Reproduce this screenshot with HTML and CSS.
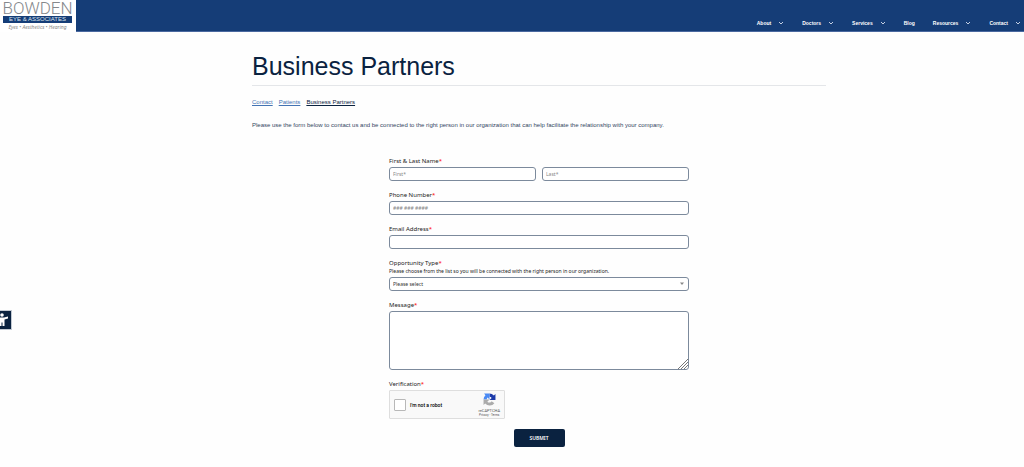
FILE: index.html
```html
<!DOCTYPE html>
<html lang="en">
<head>
  <meta charset="UTF-8">
  <meta name="viewport" content="width=device-width, initial-scale=1">
  <title>Business Partners</title>
  <link rel="stylesheet" href="styles.css">
</head>
<body>
  <!-- Header -->
  <header class="site-header">
    <a class="logo" href="#">
      <span class="logo-name">BOWDEN</span>
      <span class="logo-band">EYE &amp; ASSOCIATES</span>
      <span class="logo-tagline">Eyes • Aesthetics • Hearing</span>
    </a>
    <nav class="main-nav">
      <ul>
        <li><a href="#">About</a><svg class="chevron" viewBox="0 0 6 4"><path d="M1 1l2 2 2-2"/></svg></li>
        <li><a href="#">Doctors</a><svg class="chevron" viewBox="0 0 6 4"><path d="M1 1l2 2 2-2"/></svg></li>
        <li><a href="#">Services</a><svg class="chevron" viewBox="0 0 6 4"><path d="M1 1l2 2 2-2"/></svg></li>
        <li><a href="#">Blog</a></li>
        <li><a href="#">Resources</a><svg class="chevron" viewBox="0 0 6 4"><path d="M1 1l2 2 2-2"/></svg></li>
        <li><a href="#">Contact</a><svg class="chevron" viewBox="0 0 6 4"><path d="M1 1l2 2 2-2"/></svg></li>
      </ul>
    </nav>
  </header>

  <!-- Accessibility button -->
  <button class="access-btn" type="button" aria-label="Accessibility">
    <svg viewBox="0 0 14 14">
      <circle cx="7" cy="2" r="1.800"/>
      <path d="M1 3.500l4 1h4l4-1v2l-3.500 1V13h-2V9.500h-1V13h-2V6.500L1 5.500z"/>
    </svg>
  </button>

  <main class="content">
    <h1>Business Partners</h1>

    <nav class="breadcrumbs">
      <a href="#">Contact</a>
      <a href="#">Patients</a>
      <a href="#" class="current">Business Partners</a>
    </nav>

    <p class="intro">Please use the form below to contact us and be connected to the right person in our organization that can help facilitate the relationship with your company.</p>

    <form class="partner-form">
      <div class="field">
        <label for="first">First &amp; Last Name<span class="required">*</span></label>
        <div class="name-row">
          <input type="text" id="first" placeholder="First*">
          <input type="text" id="last" placeholder="Last*" aria-label="Last Name">
        </div>
      </div>

      <div class="field">
        <label for="phone">Phone Number<span class="required">*</span></label>
        <input type="tel" id="phone" placeholder="### ### ####">
      </div>

      <div class="field">
        <label for="email">Email Address<span class="required">*</span></label>
        <input type="email" id="email">
      </div>

      <div class="field">
        <label for="type">Opportunity Type<span class="required">*</span></label>
        <p class="hint">Please choose from the list so you will be connected with the right person in our organization.</p>
        <div class="select-wrap">
          <select id="type">
            <option>Please select</option>
          </select>
          <svg class="select-arrow" viewBox="0 0 6 4"><path d="M1 0.500h4L3 3z"/></svg>
        </div>
      </div>

      <div class="field">
        <label for="message">Message<span class="required">*</span></label>
        <div class="message-wrap">
          <textarea id="message"></textarea>
          <svg class="grip" viewBox="0 0 10 10"><path d="M0 10L10 0M3 10l7-7M6 10l4-4"/></svg>
        </div>
      </div>

      <div class="field">
        <label for="robot">Verification<span class="required">*</span></label>
        <div class="captcha">
          <input type="checkbox" id="robot">
          <label for="robot">I'm not a robot</label>
          <div class="captcha-brand">
            <svg viewBox="0 0 24 24">
              <path fill="#1c3aa9" d="M12 1a11 11 0 0 1 8 3.500L23 2v11H12l4-4A5 5 0 0 0 12 7z"/>
              <path fill="#4a8af4" d="M12 1v11L8.500 8.500A5 5 0 0 0 7 12H1A11 11 0 0 1 4.500 4L2 1z"/>
              <path fill="#ababab" d="M1 12h11l-4 4A5 5 0 0 0 16 15l5 4A11 11 0 0 1 4 19.500L1 22z"/>
            </svg>
            <span class="captcha-name">reCAPTCHA</span>
            <span class="captcha-links"><a href="#">Privacy</a> - <a href="#">Terms</a></span>
          </div>
        </div>
      </div>

      <button class="submit-btn" type="submit">SUBMIT</button>
    </form>
  </main>
</body>
</html>
```

FILE: styles.css
```css
* {
  margin: 0;
  padding: 0;
  box-sizing: border-box;
}
body {
  font-family: "Liberation Sans", Arial, sans-serif;
  background: #fefefe;
  color: #0a2240;
  font-size: 6px;
  line-height: 8px;
}
ul {
  list-style: none;
}

/* Header */
.site-header {
  display: flex;
  justify-content: space-between;
  align-items: stretch;
  height: 32px;
  background: #153d77;
  border-bottom: 1px solid #4a69a0;
}
.logo {
  display: flex;
  flex-direction: column;
  align-items: center;
  width: 76px;
  height: 32px;
  padding: 1px 4px 0 3px;
  background: #fff;
  text-decoration: none;
  white-space: nowrap;
}
.logo-name {
  font-family: Roboto, sans-serif;
  font-weight: 300;
  font-size: 17px;
  line-height: 15px;
  color: #85888c;
}
.logo-band {
  width: 100%;
  background: #153d77;
  color: #dfe6f0;
  font-size: 6px;
  line-height: 7px;
  text-align: center;
}
.logo-tagline {
  color: #888;
  font-family: "Noto Sans", sans-serif;
  font-size: 5px;
  font-style: italic;
  line-height: 8px;
}

/* Navigation */
.main-nav {
  display: flex;
  align-items: flex-end;
  padding: 0 3px 4px 0;
}
.main-nav ul {
  display: flex;
  gap: 18px;
}
.main-nav li {
  display: flex;
  align-items: center;
  gap: 7px;
}
.main-nav a {
  color: #fff;
  font-size: 5px;
  font-weight: 700;
  text-decoration: none;
}
.chevron {
  width: 6px;
  height: 4px;
  fill: none;
  stroke: #c5d0e2;
}

/* Accessibility button */
.access-btn {
  position: fixed;
  left: 0;
  top: 310px;
  width: 12px;
  height: 20px;
  background: #0a2240;
  border: 1px solid #c3cad3;
  border-left: none;
  overflow: hidden;
}
.access-btn svg {
  display: block;
  width: 14px;
  height: 14px;
  margin-left: -5px;
  fill: #fff;
}

/* Page content */
.content {
  width: 574px;
  max-width: 90%;
  margin: 0 auto;
  position: relative;
  left: 27px;
}
h1 {
  padding: 18px 0 3px;
  border-bottom: 1px solid #e4e6e9;
  font-size: 25px;
  font-weight: 400;
  line-height: 32px;
}
.breadcrumbs {
  display: flex;
  gap: 6px;
  margin-top: 12px;
}
.breadcrumbs a {
  color: #4373b3;
}
.breadcrumbs .current {
  color: #0a2240;
}
.intro {
  margin-top: 15px;
  color: #33455e;
}

/* Form */
.partner-form {
  display: flex;
  flex-direction: column;
  gap: 10px;
  max-width: 300px;
  margin: 28px auto 20px;
  font-family: "Noto Sans", sans-serif;
  color: #222;
}
.field > label {
  display: block;
  margin-bottom: 2px;
}
.required {
  color: #f00;
}
.hint {
  margin-top: -2px;
  margin-bottom: 2px;
  font-size: 5px;
  line-height: 8px;
}
.name-row {
  display: flex;
  gap: 6px;
}
input,
select,
textarea {
  display: block;
  width: 100%;
  height: 14px;
  padding: 0 3px;
  background: #fff;
  border: 1px solid #7c8a9c;
  border-radius: 3px;
  font: inherit;
  font-size: 5px;
  color: #333;
}
input::placeholder {
  color: #888;
}
.select-wrap,
.message-wrap {
  position: relative;
}
select {
  appearance: none;
}
.select-arrow {
  position: absolute;
  right: 4px;
  top: 5px;
  width: 6px;
  height: 4px;
  fill: #888;
}
textarea {
  height: 59px;
  resize: none;
}
.grip {
  position: absolute;
  right: 1px;
  bottom: 1px;
  width: 10px;
  height: 10px;
  stroke: #777;
}

/* Captcha */
.captcha {
  display: flex;
  align-items: center;
  width: 116px;
  height: 29px;
  padding: 0 4px;
  background: #f9f9f9;
  border: 1px solid #dedede;
  border-radius: 1px;
}
.captcha input {
  appearance: none;
  width: 12px;
  height: 12px;
  padding: 0;
  margin-right: 4px;
  border: 1px solid #b8b8b8;
  border-radius: 1px;
}
.captcha label {
  font-family: Roboto, sans-serif;
  font-size: 5px;
  font-weight: 500;
  color: #000;
}
.captcha-brand {
  display: flex;
  flex-direction: column;
  align-items: center;
  margin-left: auto;
  font-family: Roboto, sans-serif;
  color: #555;
}
.captcha-brand svg {
  width: 13px;
  height: 13px;
  margin-bottom: 2px;
}
.captcha-name {
  font-size: 4px;
  line-height: 5px;
}
.captcha-links {
  font-size: 3px;
  line-height: 4px;
}
.captcha-links a {
  color: inherit;
  text-decoration: none;
}

.submit-btn {
  align-self: center;
  width: 51px;
  height: 18px;
  background: #0a2240;
  border: none;
  border-radius: 2px;
  color: #fff;
  font: inherit;
  font-size: 5px;
  font-weight: 600;
}
```
